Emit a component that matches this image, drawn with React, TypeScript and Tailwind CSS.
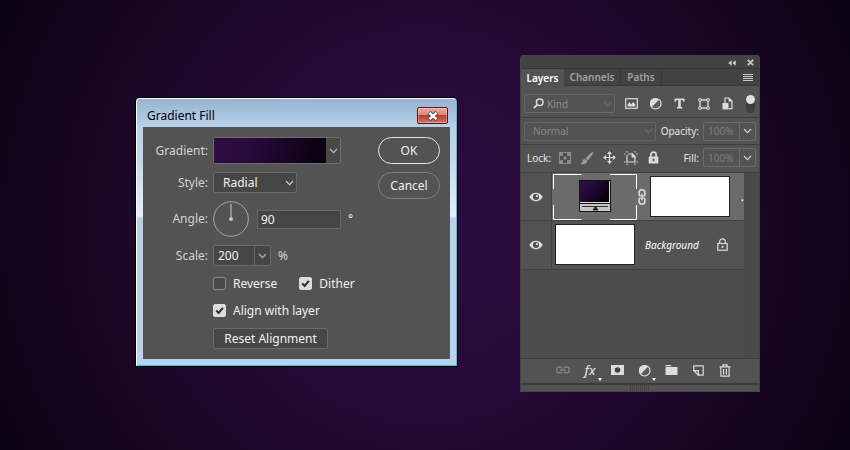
import React from "react";

const check = (
  <svg viewBox="0 0 13 13" className="pointer-events-none absolute inset-0 hidden size-[13px] peer-checked:block" fill="none" stroke="#2f2f2f" strokeWidth="2">
    <path d="M3.2 6.4 5.6 8.9 9.9 3.9" />
  </svg>
);

function Chevron({ className = "" }: { className?: string }) {
  return (
    <svg viewBox="0 0 9 6" className={"h-[6px] w-[9px] " + className} fill="none" stroke="currentColor" strokeWidth="1.1">
      <path d="M1 1 4.5 4.6 8 1" />
    </svg>
  );
}

function Check({ label, on }: { label: string; on?: boolean }) {
  return (
    <label className="flex items-center gap-[7px]">
      <span className="relative size-[13px]">
        <input
          type="checkbox"
          defaultChecked={on}
          className="peer block size-[13px] appearance-none rounded-[2px] border border-[#8c8c8c] bg-[#484848] checked:border-[#dcdcdc] checked:bg-[#dcdcdc]"
        />
        {check}
      </span>
      {label}
    </label>
  );
}

function Row({ id, label, className, children }: { id: string; label: string; className: string; children: React.ReactNode }) {
  return (
    <div className={"flex items-center gap-[5px] " + className}>
      <label htmlFor={id} className="w-[65px] text-right text-[#d2d2d2]">{label}</label>
      {children}
    </div>
  );
}

function GradientDialog() {
  return (
    <section className="absolute top-[97px] left-[135px] w-[323px] rounded-t-[5px] border border-black text-[12px] leading-4">
      <div className="rounded-t-[4px] border border-t-white border-r-[#2fcbe3] border-b-[#2fcbe3] border-l-white bg-[linear-gradient(180deg,#98b3d0_0px,#b9d1ea_28px,#c3d8ee_60px,#e6effa_117px,#b9d1ea_119px,#b9d1ea_100%)] px-[6px] pb-[6px]">
        <header className="flex h-[28px] items-center justify-between pt-[5px] pr-[2px] pl-[4px]">
          <h1 className="text-black">Gradient Fill</h1>
          <button aria-label="Close" className="flex h-[17px] w-[31px] items-center justify-center rounded-[2px] border border-[#4a1a1c] bg-[linear-gradient(180deg,#e9a99b_0%,#d98873_45%,#bf3d25_50%,#d4735f_100%)] shadow-[inset_0_0_0_1px_#ffffff55]">
            <svg viewBox="0 0 12 10" className="h-[10px] w-[12px]">
              <path d="M2 1.500 10 8.500M10 1.500 2 8.500" stroke="#4c505c" strokeWidth="4.400" />
              <path d="M2.500 1.900 9.500 8.100M9.500 1.900 2.500 8.100" stroke="#fff" strokeWidth="2.500" />
            </svg>
          </button>
        </header>
        <div className="flex justify-between bg-[#535353] py-[10px] pr-[10px] text-[#f0f0f0]">
          <div className="flex flex-col gap-2">
            <Row id="gradient" label="Gradient:" className="h-[27px]">
              <div className="flex h-[27px] w-[128px] rounded-[2px] border border-[#6e6e6e] bg-[#484848]">
                <button id="gradient" aria-label="Edit gradient" className="flex-1 bg-[linear-gradient(100deg,#300c45_0%,#2a0a3d_30%,#0c0114_90%)]" />
                <button aria-label="Choose gradient" className="flex w-[14px] items-center justify-center text-[#bdbdbd]"><Chevron /></button>
              </div>
            </Row>
            <Row id="style" label="Style:" className="h-[21px]">
              <div className="relative flex items-center">
                <select id="style" className="h-[21px] w-[84px] appearance-none rounded-[2px] border border-[#6a6a6a] bg-[#464646] pl-[9px]">
                  <option>Radial</option>
                </select>
                <Chevron className="pointer-events-none absolute right-[3px] text-[#d0d0d0]" />
              </div>
            </Row>
            <Row id="angle" label="Angle:" className="h-[36px]">
              <svg viewBox="0 0 36 36" className="size-[36px]" fill="none" stroke="#a8a8a8">
                <circle cx="18" cy="18" r="17.300" />
                <path d="M18 3v15" strokeWidth="1.400" />
                <circle cx="18" cy="18" r="2" fill="#c8c8c8" stroke="none" />
              </svg>
              <input id="angle" defaultValue="90" className="ml-[3px] h-[19px] w-[84px] border border-[#686868] bg-[#464646] px-[3px]" />
              <span className="pl-[2px]">°</span>
            </Row>
            <Row id="scale" label="Scale:" className="h-[21px]">
              <div className="flex h-[21px] w-[58px] rounded-[2px] border border-[#6a6a6a] bg-[#464646]">
                <input id="scale" defaultValue="200" className="w-[41px] border-r border-[#666] px-[4px]" />
                <button aria-label="Scale slider" className="flex flex-1 items-center justify-center text-[#b8b8b8]"><Chevron /></button>
              </div>
              <span className="pl-[2px] text-[#d2d2d2]">%</span>
            </Row>
            <div className="flex h-[19px] gap-[22px] pl-[70px]">
              <Check label="Reverse" />
              <Check label="Dither" on />
            </div>
            <div className="flex h-[19px] pl-[70px]">
              <Check label="Align with layer" on />
            </div>
            <button className="ml-[70px] h-[21px] w-[115px] rounded-[2px] border border-[#6a6a6a] bg-[#474747]">Reset Alignment</button>
          </div>
          <div className="flex flex-col gap-2">
            <button className="h-[27px] w-[62px] rounded-full border border-[#e4e4e4]">OK</button>
            <button className="h-[27px] w-[62px] rounded-full border border-[#808080]">Cancel</button>
          </div>
        </div>
      </div>
    </section>
  );
}

const ink = "#dcdcdc";

function Adjustment() {
  return (
    <svg viewBox="0 0 13 13" className="size-[13px]">
      <circle cx="6.500" cy="6.500" r="5" fill="none" stroke={ink} strokeWidth="1.200" />
      <path d="M2.600 10.400A5.500 5.500 0 0 1 10.400 2.600Z" fill={ink} />
      <path d="M10.400 2.600A5.500 5.500 0 0 1 2.600 10.400Z" fill="#5c5c5c" />
      <path d="M10.400 2.600A5.500 5.500 0 0 1 2.600 10.400" fill="none" stroke={ink} strokeWidth="1.200" />
    </svg>
  );
}

function Padlock({ small }: { small?: boolean }) {
  return small ? (
    <svg viewBox="0 0 11 13" className="h-[13px] w-[11px]" fill="none" stroke={ink} strokeWidth="1.200">
      <rect x="0.800" y="5.500" width="9.400" height="6.700" />
      <path d="M2.700 5.500V3.600a2.800 2.800 0 0 1 5.600 0V5.500" />
      <path d="M5.500 7.800v2" strokeWidth="1.800" />
    </svg>
  ) : (
    <svg viewBox="0 0 11 13" className="h-[13px] w-[11px]">
      <path d="M2.900 6V3.800a2.600 2.600 0 0 1 5.200 0V6" fill="none" stroke={ink} strokeWidth="1.700" />
      <rect x="0.700" y="5.400" width="9.600" height="7.200" rx="0.600" fill={ink} />
      <path d="M5.500 7.600v2.600" stroke="#444" strokeWidth="1.700" />
    </svg>
  );
}

function Eye() {
  return (
    <svg viewBox="0 0 14 10" className="h-[10px] w-[14px]">
      <path d="M0.300 5C3.300-0.600 10.700-0.600 13.700 5 10.700 10.600 3.300 10.600 0.300 5Z" fill={ink} />
      <circle cx="7" cy="5" r="3" fill="#4a4a4a" />
      <circle cx="7.900" cy="4.200" r="1.100" fill={ink} />
    </svg>
  );
}

const filters: [string, React.ReactNode][] = [
  ["Pixel layers", (
    <svg viewBox="0 0 13 11" className="h-[11px] w-[13px]">
      <rect x="0.700" y="0.700" width="11.600" height="9.600" fill="none" stroke={ink} strokeWidth="1.200" />
      <path d="M2.600 8.400V6.400L4.600 3.900 6.200 6.400 8 3.900 10.400 6.400V8.400Z" fill={ink} />
    </svg>
  )],
  ["Adjustment layers", <Adjustment />],
  ["Type layers", (
    <svg viewBox="0 0 11 11" className="size-[11px]">
      <path d="M0.500 0.500H10.500V3.800H9.200L8.600 2.100H6.800V9.100H8.200V10.500H2.800V9.100H4.200V2.100H2.400L1.800 3.800H0.500Z" fill={ink} />
    </svg>
  )],
  ["Shape layers", (
    <svg viewBox="0 0 12 12" className="size-[12px]" fill="none" stroke={ink}>
      <path d="M3 2H9M3 10H9M2 3V9M10 3V9" strokeWidth="1.300" />
      <path d="M.8.8h2.400v2.400H.8zM8.800.8h2.400v2.400H8.800zM.8 8.800h2.400v2.400H.8zM8.800 8.800h2.400v2.400H8.800z" fill="#535353" />
    </svg>
  )],
  ["Smart objects", (
    <svg viewBox="0 0 11 13" className="h-[13px] w-[11px]">
      <path d="M3 6V1H7L10 4V11.600H6.500" fill="none" stroke={ink} strokeWidth="1.200" />
      <path d="M6.600.6V4.400H10.400Z" fill={ink} />
      <rect x="0.500" y="6" width="6" height="6.400" fill={ink} />
    </svg>
  )],
];

const locks: [string, React.ReactNode][] = [
  ["Lock transparent pixels", (
    <svg viewBox="0 0 12 12" className="size-[12px]">
      <rect x="0.500" y="0.500" width="11" height="11" fill="#4c4c4c" stroke="#8a8a8a" />
      <path d="M1 1h3v3H1zM8 1h3v3H8zM4.500 4.500h3v3h-3zM1 8h3v3H1zM8 8h3v3H8z" fill="#8e8e8e" />
    </svg>
  )],
  ["Lock image pixels", (
    <svg viewBox="0 0 14 14" className="size-[14px]" fill="#9a9a9a">
      <path d="M13.400.6 12.600 3.400 8 9.400 5.400 7.200 11 1.800ZM5 7.800C3 8 2.600 9.600 2.200 11.200 1.900 12.200 1.200 12.800.4 13.100 3.600 13.800 7.200 13 7.300 10Z" />
    </svg>
  )],
  ["Lock position", (
    <svg viewBox="0 0 13 13" className="size-[13px]" fill={ink}>
      <path d="M6.500.1 9 3.100H7.100V5.900H9.900V4L12.900 6.500 9.900 9V7.100H7.100V9.900H9L6.500 12.900 4 9.900H5.900V7.100H3.100V9L.1 6.500 3.100 4V5.900H5.900V3.100H4Z" />
    </svg>
  )],
  ["Lock artboard", (
    <svg viewBox="0 0 14 14" className="size-[14px]" fill="none" stroke={ink} strokeWidth="1.200">
      <path d="M3 4V11H11V5.800L8.500 3H4" />
      <path d="M8.200 3V6H11Z" fill={ink} />
      <path d="M.2 3H1.600M3 .2V1.600M11 .2V1.600M12.400 3H13.800M.2 11H1.600M3 12.400V13.800M11 12.400V13.800M12.400 11H13.800" />
    </svg>
  )],
  ["Lock all", <Padlock />],
];

const actions: [string, React.ReactNode, boolean][] = [
  ["Link layers", (
    <svg viewBox="0 0 14 8" className="h-[8px] w-[14px]" fill="none" stroke="#858585" strokeWidth="1.300">
      <path d="M6.200 2.300C5.600 1.300 4.800.9 3.800.9 2 .9.7 2.200.7 4S2 7.100 3.800 7.100C4.800 7.100 5.600 6.700 6.200 5.700M7.800 2.300C8.400 1.300 9.200.9 10.200.9 12 .9 13.300 2.200 13.300 4S12 7.100 10.200 7.100C9.200 7.100 8.400 6.700 7.800 5.700M4 4H10" />
    </svg>
  ), false],
  ["Layer style", <span className="text-[13px] leading-4 font-medium italic">fx</span>, true],
  ["Add mask", (
    <svg viewBox="0 0 13 10" className="h-[10px] w-[13px]">
      <rect width="13" height="10" fill={ink} />
      <circle cx="6.500" cy="5" r="2.800" fill="#444" />
    </svg>
  ), false],
  ["New adjustment layer", <Adjustment />, true],
  ["New group", (
    <svg viewBox="0 0 13 10" className="h-[10px] w-[13px]" fill={ink}>
      <path d="M.5 0H5.500L6.800 1.300H.5ZM.5 2.100H12.500V10H.5Z" />
    </svg>
  ), false],
  ["New layer", (
    <svg viewBox="0 0 11 11" className="size-[11px]" fill="none" stroke={ink} strokeWidth="1.200">
      <path d="M.8 5V.8H10.200V10.200H6" />
      <path d="M.8 5.600H5.400V10.200Z" />
    </svg>
  ), false],
  ["Delete layer", (
    <svg viewBox="0 0 12 13" className="h-[13px] w-[12px]" fill="none" stroke={ink} strokeWidth="1.200">
      <path d="M.5 2.800H11.500M4 2.600V.9H8V2.600M1.900 3V12.200H10.100V3M4.600 5V10.600M7.400 5V10.600" />
    </svg>
  ), false],
];

function Percent({ id, label }: { id: string; label: string }) {
  return (
    <div className="flex items-center gap-1">
      <label htmlFor={id} className="text-[#e6e6e6]">{label}</label>
      <div className="flex h-[19px] w-[53px] rounded-[2px] border border-[#6b6b6b] text-[#7d7d7d]">
        <input id={id} defaultValue="100%" className="w-[36px] border-r border-[#6b6b6b] px-[4px]" />
        <button aria-label={label + " slider"} className="flex flex-1 items-center justify-center text-[#d4d4d4]"><Chevron /></button>
      </div>
    </div>
  );
}

function GradientThumb() {
  return (
    <svg viewBox="0 0 84 46" className="h-[46px] w-[84px]" role="img" aria-label="Gradient fill thumbnail">
      <defs>
        <linearGradient id="fill" x1="0" y1="0.200" x2="1" y2="0.700">
          <stop offset="0" stopColor="#300c45" />
          <stop offset="0.400" stopColor="#250836" />
          <stop offset="0.900" stopColor="#090010" />
        </linearGradient>
      </defs>
      <path d="M.5 15V.5H28.500M57 .5H83.500V15M83.500 31V45.500H57M28.500 45.500H.5V31" fill="none" stroke="#fff" />
      <rect x="26" y="6" width="32" height="32" fill="#141414" />
      <rect x="27" y="7" width="30" height="22" fill="#ddd" />
      <rect x="27" y="7" width="29" height="21" fill="url(#fill)" />
      <rect x="27" y="30" width="30" height="7" fill="#c6c6c6" />
      <path d="M29 32.500H55M42.500 32.500 45 36H40Z" stroke="#222" fill="#222" strokeWidth="0.900" />
    </svg>
  );
}

function LayersPanel() {
  return (
    <section className="absolute top-[55px] left-[520px] w-[240px] rounded-t-[4px] border-x border-[#454545] bg-[#535353] text-[10px] leading-4">
      <header className="flex h-[14px] items-center justify-end gap-[11px] rounded-t-[4px] border-b border-[#353535] bg-[#434343] pt-[2px] pr-[5px]">
        <button aria-label="Collapse">
          <svg viewBox="0 0 8 6" className="h-[6px] w-[8px]" fill="#d0d0d0"><path d="M3.600 .3V5.700L.3 3ZM7.700 .3V5.700L4.400 3Z" /></svg>
        </button>
        <button aria-label="Close panel">
          <svg viewBox="0 0 7 7" className="size-[7px]" stroke="#c4c4c4" strokeWidth="1.900"><path d="M.8.8 6.200 6.200M6.200.8.8 6.200" /></svg>
        </button>
      </header>
      <div className="flex h-[17px] bg-[#434343] font-semibold text-[#a0a0a0]" role="tablist">
        <button role="tab" aria-selected="true" className="w-[43px] bg-[#535353] text-white">Layers</button>
        <button role="tab" className="w-[57px] border-r border-b border-[#383838]">Channels</button>
        <button role="tab" className="w-[41px] border-r border-b border-[#383838]">Paths</button>
        <div className="flex flex-1 items-center justify-end border-b border-[#383838] pt-[2px] pr-[6px]">
          <button aria-label="Panel menu">
            <svg viewBox="0 0 10 8" className="block h-[8px] w-[10px]" stroke="#c8c8c8"><path d="M0 .5H10M0 2.500H10M0 4.500H10M0 6.500H10" /></svg>
          </button>
        </div>
      </div>
      <div className="flex h-[32px] items-center justify-between border-b border-[#404040] pt-[4px] pr-[4px] pl-[3px]">
        <div className="relative flex items-center">
          <svg viewBox="0 0 11 11" className="pointer-events-none absolute left-[9px] size-[11px]" fill="none" stroke={ink}>
            <circle cx="6.700" cy="4.300" r="3.300" strokeWidth="1.500" />
            <path d="M4.300 6.700.9 10.200" strokeWidth="1.900" />
          </svg>
          <select aria-label="Filter type" className="h-[19px] w-[91px] appearance-none rounded-[2px] border border-[#666] pl-[22px] text-[#8c8c8c]">
            <option>Kind</option>
          </select>
          <Chevron className="pointer-events-none absolute right-[3px] text-[#6a6a6a]" />
        </div>
        <div className="flex pr-[2px]">
          {filters.map(([name, icon]) => (
            <button key={name} aria-label={name} className="flex h-[18px] w-[24px] items-center justify-center">{icon}</button>
          ))}
        </div>
        <button role="switch" aria-checked="true" aria-label="Layer filtering" className="h-[18px] w-[9px] rounded-full bg-[#3e3e3e]">
          <span className="mb-[9px] block size-[9px] rounded-full bg-[#e0e0e0]" />
        </button>
      </div>
      <div className="flex h-[27px] items-center justify-between border-b border-[#404040] px-[3px]">
        <div className="relative flex items-center">
          <select aria-label="Blend mode" className="h-[19px] w-[132px] appearance-none rounded-[2px] border border-[#666] pl-[8px] text-[#868686]">
            <option>Normal</option>
          </select>
          <Chevron className="pointer-events-none absolute right-[3px] text-[#6a6a6a]" />
        </div>
        <Percent id="opacity" label="Opacity:" />
      </div>
      <div className="flex h-[28px] items-center justify-between border-b border-[#404040] pr-[3px] pb-[2px] pl-[6px]">
        <div className="flex items-center gap-[3px]">
          <span className="text-[#e6e6e6]">Lock:</span>
          <div className="flex">
            {locks.map(([name, icon]) => (
              <button key={name} aria-label={name} className="flex h-[18px] w-[22px] items-center justify-center">{icon}</button>
            ))}
          </div>
        </div>
        <Percent id="fill-opacity" label="Fill:" />
      </div>
      <div className="flex h-[186px] border-b border-[#3e3e3e] bg-[#4d4d4d]">
        <ul className="flex-1">
          <li className="flex h-[48px] border-b border-[#404040]">
            <button aria-label="Toggle gradient layer" className="flex w-[31px] items-center justify-center border-r border-[#434343] bg-[#535353]"><Eye /></button>
            <div className="flex flex-1 items-center bg-[#6b6b6b] pl-[1px]">
              <GradientThumb />
              <svg viewBox="0 0 8 16" className="mr-[4px] ml-[1px] h-[16px] w-[8px]" fill="none" stroke={ink} strokeWidth="1.600">
                <path d="M2.600 7.200C1.600 6.800 1.100 6.200 1.100 5.200V3.700A2.900 2.900 0 0 1 6.900 3.700V5.200C6.900 6.200 6.400 6.800 5.400 7.200M2.600 8.800C1.600 9.200 1.100 9.800 1.100 10.800V12.300A2.900 2.900 0 0 0 6.900 12.300V10.800C6.900 9.800 6.400 9.200 5.400 8.800M4 4.800V11.200" />
              </svg>
              <div className="h-[41px] w-[80px] border border-[#222] bg-white" />
              <span className="flex-1 text-right text-[12px] text-white">.</span>
            </div>
          </li>
          <li className="flex h-[49px] border-b border-[#404040] bg-[#535353]">
            <button aria-label="Toggle background" className="flex w-[31px] items-center justify-center border-r border-[#434343]"><Eye /></button>
            <div className="flex flex-1 items-center justify-between pr-[16px] pb-[1px] pl-[3px]">
              <div className="flex items-center gap-[10px]">
                <div className="h-[41px] w-[80px] border border-[#222] bg-white" />
                <span className="text-white italic">Background</span>
              </div>
              <Padlock small />
            </div>
          </li>
        </ul>
        <div className="w-[15px] bg-[#4a4a4a]" />
      </div>
      <footer>
        <div className="flex h-[24px] justify-center pl-[8px]">
          {actions.map(([name, icon, menu]) => (
            <button key={name} aria-label={name} className="relative flex h-[24px] w-[27px] items-center justify-center pb-[2px] text-[#dcdcdc]">
              {icon}
              {menu && (
                <svg viewBox="0 0 4 3" className="absolute right-[2px] bottom-[2px] h-[3px] w-[4px]" fill="#fff"><path d="M0 0H4L2 3Z" /></svg>
              )}
            </button>
          ))}
        </div>
        <div className="flex h-[9px] justify-center border-t-2 border-b border-t-[#3c3c3c] border-b-[#474747]">
          <div className="w-[20px] bg-[repeating-linear-gradient(90deg,#444_0px,#444_1px,#535353_1px,#535353_2px)]" />
        </div>
      </footer>
    </section>
  );
}

export default function App() {
  return (
    <main className="relative min-h-screen overflow-hidden bg-[radial-gradient(circle_at_center,#2c0b3e_0px,#260936_190px,#15051f_370px,#0d0214_480px)] font-['Noto_Sans','Open_Sans',sans-serif]">
      <GradientDialog />
      <LayersPanel />
    </main>
  );
}
